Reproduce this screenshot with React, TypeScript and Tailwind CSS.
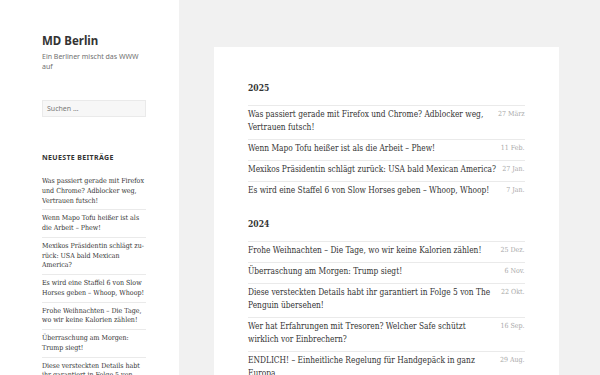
const recent = [
  'Was passiert gerade mit Firefox und Chrome? Adblocker weg, Vertrauen futsch!',
  'Wenn Mapo Tofu heißer ist als die Arbeit – Phew!',
  'Mexikos Präsidentin schlägt zu\u00adrück: USA bald Mexican America?',
  'Es wird eine Staffel 6 von Slow Horses geben – Whoop, Whoop!',
  'Frohe Weihnachten – Die Tage, wo wir keine Kalorien zählen!',
  'Überraschung am Morgen: Trump siegt!',
  'Diese versteckten Details habt ihr garantiert in Folge 5 von The Penguin übersehen!',
];

const archive = [
  {
    year: '2025',
    posts: [
      { title: 'Was passiert gerade mit Firefox und Chrome? Adblocker weg, Vertrauen futsch!', date: '27 März' },
      { title: 'Wenn Mapo Tofu heißer ist als die Arbeit – Phew!', date: '11 Feb.' },
      { title: 'Mexikos Präsidentin schlägt zurück: USA bald Mexican America?', date: '27 Jan.' },
      { title: 'Es wird eine Staffel 6 von Slow Horses geben – Whoop, Whoop!', date: '7 Jan.' },
    ],
  },
  {
    year: '2024',
    posts: [
      { title: 'Frohe Weihnachten – Die Tage, wo wir keine Kalorien zählen!', date: '25 Dez.' },
      { title: 'Überraschung am Morgen: Trump siegt!', date: '6 Nov.' },
      { title: 'Diese versteckten Details habt ihr garantiert in Folge 5 von The Penguin übersehen!', date: '22 Okt.' },
      { title: 'Wer hat Erfahrungen mit Tresoren? Welcher Safe schützt wirklich vor Einbrechern?', date: '16 Sep.' },
      { title: 'ENDLICH! – Einheitliche Regelung für Handgepäck in ganz Europa', date: '29 Aug.' },
    ],
  },
];

export default function App() {
  return (
    <div className="flex h-[375px] w-[600px] overflow-hidden bg-[#f1f1f1] text-[#333]">
      <aside className="w-[179px] shrink-0 bg-white pl-[42px] pr-[33px] pt-[33px] font-['Noto_Sans',sans-serif]">
        <h1 className="text-[11.5px] font-bold leading-[16px]">MD Berlin</h1>
        <p className="mt-[3px] text-[7px] leading-[10px] text-[#707070]">Ein Berliner mischt das WWW auf</p>

        <div className="mt-[28px] h-[17px] w-[104px] border border-[#eaeaea] bg-[#f7f7f7] px-[4px] text-[7px] leading-[15px] text-[#777]">
          Suchen …
        </div>

        <h2 className="mt-[36px] text-[7px] font-bold uppercase leading-[10px] tracking-[0.05em]">Neueste Beiträge</h2>
        <ul className="mt-[10px] w-[104px] font-['DejaVu_Serif_Condensed','DejaVu_Serif',serif] font-stretch-condensed text-[7px] leading-[9.75px]">
          {recent.map((t) => (
            <li key={t} className="border-b border-[#eaeaea] pb-[3px] pt-[4px]">
              {t}
            </li>
          ))}
        </ul>
      </aside>

      <main className="flex-1 pl-[35px] pr-[42px] pt-[47px]">
        <div className="h-[400px] bg-white px-[34px] pt-[35px] font-['DejaVu_Serif_Condensed','DejaVu_Serif',serif] font-stretch-condensed">
          {archive.map((group, i) => (
            <section key={group.year} className={i > 0 ? 'mt-[16px]' : ''}>
              <h2 className="mb-[10px] text-[8.5px] font-bold leading-[13px]">{group.year}</h2>
              <ul>
                {group.posts.map((p) => (
                  <li key={p.title} className="flex border-t border-[#eaeaea] pb-[5px] pt-[2px]">
                    <span className="w-[250px] shrink-0 text-[8.3px] leading-[13px]">{p.title}</span>
                    <span className="ml-auto whitespace-nowrap text-right text-[7px] leading-[13px] text-[#a8a8a8]">{p.date}</span>
                  </li>
                ))}
              </ul>
            </section>
          ))}
        </div>
      </main>
    </div>
  );
}
